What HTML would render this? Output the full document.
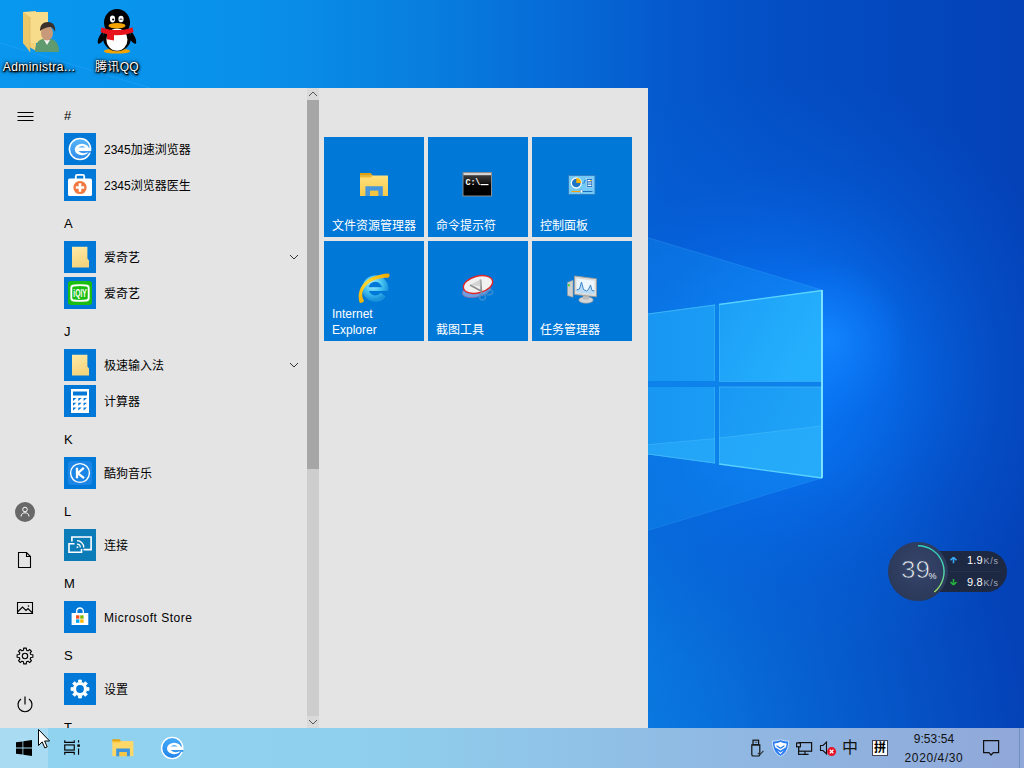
<!DOCTYPE html>
<html><head><meta charset="utf-8"><title>Desktop</title>
<style>
html,body{margin:0;padding:0}
body{width:1024px;height:768px;overflow:hidden;position:relative;background:#0560d0;font-family:"Liberation Sans","Noto Sans CJK SC",sans-serif;font-size:12px;color:#000}
.abs{position:absolute}
#wall{position:absolute;left:0;top:0}
/* desktop icons */
.dlabel{position:absolute;color:#fff;font-size:12px;line-height:14px;text-align:center;white-space:nowrap;text-shadow:1px 1px 1px #000,1px 1px 2px #000,0 0 2px rgba(0,0,0,.9),0 1px 3px rgba(0,0,0,.95),0 0 5px rgba(0,0,0,.6)}
/* start menu */
#start{position:absolute;left:0;top:88px;width:648px;height:640px;background:#e4e4e4;overflow:hidden}
.hdr{position:absolute;left:64px;height:36px;line-height:42px;font-size:13px;color:#000}
.item{position:absolute;left:64px;height:36px;width:240px}
.item .ic{position:absolute;left:0;top:2px;width:32px;height:32px;background:#0078d7}
.item .tx{position:absolute;left:40px;top:1px;line-height:36px;font-size:12px;white-space:nowrap}
.item .ch{position:absolute;left:225px;top:14px}
.tile{position:absolute;width:100px;height:100px;background:#0078d7;color:#fff}
.tile .lb{position:absolute;left:8px;bottom:3px;font-size:12px;line-height:16px}
.tile svg{position:absolute}
/* taskbar */
#task{position:absolute;left:0;top:728px;width:1024px;height:40px;background:linear-gradient(90deg,#90d3ef 0%,#8fd0ee 35%,#90bce4 65%,#90a8d9 100%)}
#sb{position:absolute;left:0;top:0;width:48px;height:40px;background:#a9dcf3}
.clock{position:absolute;font-size:12px;line-height:14px;color:#111;text-align:center;width:80px}
</style></head><body>
<svg id="wall" width="1024" height="768" viewBox="0 0 1024 768">
<defs>
<linearGradient id="bg" x1="0" y1="0" x2="1" y2="0">
<stop offset="0" stop-color="#0998ef"/><stop offset=".25" stop-color="#0990ea"/><stop offset=".42" stop-color="#087edf"/><stop offset=".55" stop-color="#066ad6"/><stop offset=".66" stop-color="#0558cc"/><stop offset=".76" stop-color="#044ec4"/><stop offset="1" stop-color="#0441b7"/>
</linearGradient>
<radialGradient id="low" cx="420" cy="820" r="620" gradientUnits="userSpaceOnUse">
<stop offset="0" stop-color="#0e90ee" stop-opacity=".9"/><stop offset=".5" stop-color="#0c86e8" stop-opacity=".55"/><stop offset="1" stop-color="#0a78e0" stop-opacity="0"/>
</radialGradient>
<radialGradient id="glow" cx="785" cy="375" r="300" gradientUnits="userSpaceOnUse">
<stop offset="0" stop-color="#0a80ff" stop-opacity=".95"/><stop offset=".35" stop-color="#0874f4" stop-opacity=".7"/><stop offset=".7" stop-color="#0664e0" stop-opacity=".3"/><stop offset="1" stop-color="#0560d8" stop-opacity="0"/>
</radialGradient>
<radialGradient id="glow2" cx="828" cy="340" r="80" gradientUnits="userSpaceOnUse">
<stop offset="0" stop-color="#1486ff" stop-opacity=".9"/><stop offset="1" stop-color="#0c78f8" stop-opacity="0"/>
</radialGradient>
<linearGradient id="beam" x1="822" y1="0" x2="300" y2="0" gradientUnits="userSpaceOnUse">
<stop offset="0" stop-color="#1898f8" stop-opacity=".85"/><stop offset=".35" stop-color="#108eee" stop-opacity=".65"/><stop offset="1" stop-color="#0d8ce8" stop-opacity=".3"/>
</linearGradient>
<linearGradient id="p1" x1="0" y1="0" x2="1" y2=".5"><stop offset="0" stop-color="#1b9ef6"/><stop offset="1" stop-color="#25b0fd"/></linearGradient>
<linearGradient id="p2" x1="0" y1="0" x2="1" y2=".4"><stop offset="0" stop-color="#1998f3"/><stop offset="1" stop-color="#1fa4f8"/></linearGradient>
<linearGradient id="p3" x1="0" y1="0" x2="1" y2="0"><stop offset="0" stop-color="#1592f0"/><stop offset="1" stop-color="#1b9cf5"/></linearGradient>
</defs>
<rect width="1024" height="768" fill="url(#bg)"/>
<rect width="1024" height="768" fill="url(#low)"/>
<rect width="1024" height="768" fill="url(#glow)"/>
<rect width="1024" height="768" fill="url(#glow2)"/>
<!-- beams -->
<polygon points="822,290 0,43 0,384 822,384" fill="url(#beam)" opacity=".5"/>
<polygon points="822,478 0,725 0,384 822,384" fill="url(#beam)" opacity=".5"/>
<line x1="822" y1="290" x2="0" y2="43" stroke="#49b4ff" stroke-width="1" opacity=".25"/>
<line x1="822" y1="478" x2="0" y2="725" stroke="#49b4ff" stroke-width="1" opacity=".2"/>
<!-- window frame tint -->
<polygon points="600,320 822,290 822,478 600,448" fill="#0c82ea"/>
<!-- panes -->
<polygon points="719,304 822,290 822,381 719,381" fill="url(#p1)"/>
<polygon points="719,387 822,387 822,478 719,464" fill="url(#p2)"/>
<polygon points="600,320 715,304.500 715,381 600,381" fill="url(#p3)"/>
<polygon points="600,387 715,387 715,463.500 600,448" fill="url(#p3)"/>
<polygon points="719,438 822,426 822,478 719,464" fill="#2cb0fc" opacity=".55"/>
<polygon points="600,449 715,438.500 715,463.500 600,448" fill="#2cb0fc" opacity=".5"/>
<path d="M719,438 L822,426" stroke="#58c8ff" stroke-width="1" opacity=".4"/>
<path d="M600,449 L715,438.500" stroke="#58c8ff" stroke-width="1" opacity=".35"/>
<path d="M719,304.500 L822,290.500 M719,464 L822,478" fill="none" stroke="#62d8ff" stroke-width="1.300" opacity=".9"/><path d="M719.500,381 V304.500 M719.500,387 V464" fill="none" stroke="#4cc0fc" stroke-width="1" opacity=".45"/>
<path d="M719,381.500 H822 M719,387 H822" fill="none" stroke="#4cc0fc" stroke-width="1" opacity=".6"/>
<path d="M600,320.500 L715,305 M600,447.500 L715,463" fill="none" stroke="#48bcfb" stroke-width="1" opacity=".75"/><path d="M714.500,305 V381 M714.500,387 V463" fill="none" stroke="#48bcfb" stroke-width="1" opacity=".4"/>
<line x1="822" y1="290" x2="822" y2="478" stroke="#86ecff" stroke-width="1.800"/>
</svg>

<!-- desktop icons -->
<svg class="abs" style="left:20px;top:8px" width="40" height="46" viewBox="0 0 40 46">
<path d="M3 4l13-1v40l-13-8z" fill="#f3d27a"/><path d="M3 4h25v31H10z" fill="#f7dc8c"/><path d="M3 4l7 5v35l-7-9z" fill="#eac769"/><path d="M10 9h0v35" stroke="#d9b455" stroke-width=".6"/>
<path d="M15 44c0-8 3-12 8-13l4 2 4-2c5 1 8 5 8 13z" fill="#5f9b6e"/><path d="M24 32l3 5 3-5z" fill="#f4f4f4"/>
<ellipse cx="27" cy="25" rx="6" ry="7.500" fill="#c99a7a"/><path d="M20 23c0-6 3-9 8-9s8 4 7 10c-1-3-3-5-5-5-3 0-6 1-10 4z" fill="#3a2f2a"/>
</svg>
<div class="dlabel" style="left:0;top:60px;width:78px;letter-spacing:.45px">Administra...</div>
<svg class="abs" style="left:96px;top:8px" width="42" height="46" viewBox="0 0 42 48" preserveAspectRatio="none">
<ellipse cx="21" cy="45" rx="13" ry="2.600" fill="#f5a300"/>
<path d="M7 24c-4 5-6 10-5 13 1 1 3-1 6-4zM35 24c4 5 6 10 5 13-1 1-3-1-6-4z" fill="#000"/>
<ellipse cx="21" cy="31" rx="14" ry="14" fill="#000"/>
<ellipse cx="21" cy="15" rx="13" ry="14" fill="#000"/>
<ellipse cx="21" cy="33" rx="10.500" ry="11.500" fill="#fff"/>
<path d="M5.500 20c9 4 22 4 31 0l1 5c-10 4.500-23 4.500-33 0z" fill="#e8121d"/>
<path d="M11 24l7 1.500v8.500l-7-1.500z" fill="#e8121d"/>
<ellipse cx="16.500" cy="11.500" rx="2.600" ry="3.600" fill="#fff"/><ellipse cx="25" cy="11.500" rx="2.600" ry="3.400" fill="#fff"/>
<circle cx="17.200" cy="12" r="1.100" fill="#000"/><path d="M23.600 12.200q1.400-1.800 2.800 0" stroke="#000" stroke-width=".9" fill="none"/>
<ellipse cx="21" cy="18.500" rx="8.500" ry="2.800" fill="#f5a300"/>
</svg>
<div class="dlabel" style="left:78px;top:60px;width:78px;letter-spacing:.3px">腾讯QQ</div>
<div id="start">
<!-- left rail -->
<svg class="abs" style="left:0;top:0" width="48" height="640" viewBox="0 0 48 640" fill="none" stroke="#000" stroke-width="1.100">
<path d="M17.500 24.500h16M17.500 28.500h16M17.500 32.500h16" stroke-width="1"/>
<circle cx="25" cy="424" r="10" fill="#686868" stroke="none"/>
<circle cx="25" cy="421.500" r="2.300" stroke="#fff" stroke-width="1"/><path d="M21 428.500c0-5 8-5 8 0" stroke="#fff" stroke-width="1"/>
<path d="M18.500 464.500h8l4 4v11h-12z M26.500 464.500v4h4"/>
<path d="M17.500 514.500h15v11h-15z M17.500 524l5-5 3.500 3.500 2-2 4.500 4.500"/><circle cx="28.500" cy="518" r=".8" fill="#000" stroke="none"/>
<g transform="translate(25 568)" stroke-width="1.100" stroke-linejoin="round"><circle r="2.700"/><path d="M-1.50 -5.81L-1.32 -7.89L1.32 -7.89L1.50 -5.81L3.05 -5.17L4.65 -6.51L6.51 -4.65L5.17 -3.05L5.81 -1.50L7.89 -1.32L7.89 1.32L5.81 1.50L5.17 3.05L6.51 4.65L4.65 6.51L3.05 5.17L1.50 5.81L1.32 7.89L-1.32 7.89L-1.50 5.81L-3.05 5.17L-4.65 6.51L-6.51 4.65L-5.17 3.05L-5.81 1.50L-7.89 1.32L-7.89 -1.32L-5.81 -1.50L-5.17 -3.05L-6.51 -4.65L-4.65 -6.51L-3.05 -5.17z"/></g>
<path d="M25 608.500v8M21 611a7 7 0 1 0 8 0" stroke-width="1.200"/>
</svg>
<!-- headers -->
<div class="hdr" style="top:7px">#</div>
<div class="hdr" style="top:115px">A</div>
<div class="hdr" style="top:223px">J</div>
<div class="hdr" style="top:331px">K</div>
<div class="hdr" style="top:403px">L</div>
<div class="hdr" style="top:475px">M</div>
<div class="hdr" style="top:547px">S</div>
<div class="hdr" style="top:619px">T</div>
<!-- items -->
<div class="item" style="top:43px"><div class="ic"><svg width="32" height="32" viewBox="0 0 32 32"><defs><linearGradient id="e23" x1="0" y1="0" x2="0" y2="1"><stop offset="0" stop-color="#5ab6f8"/><stop offset="1" stop-color="#2c8cec"/></linearGradient></defs><circle cx="16" cy="16" r="10.600" fill="url(#e23)" stroke="#fff" stroke-width="1.500"/><ellipse cx="18" cy="16.500" rx="7.200" ry="5.700" fill="#fff"/><path d="M14.300 14.600Q18 11.300 21.700 14.600z" fill="#4dabf5"/><path d="M14.400 17.900H27v2.100l-4.200-.5Q18.200 21.700 14.400 17.900z" fill="#3797ee"/><rect x="18" y="14.900" width="8.800" height="3" fill="#fff"/></svg></div><div class="tx">2345加速浏览器</div></div>
<div class="item" style="top:79px"><div class="ic"><svg width="32" height="32" viewBox="0 0 32 32"><path d="M11.800 10V7.200a1.400 1.400 0 0 1 1.400-1.400h5.600a1.400 1.400 0 0 1 1.400 1.400V10" fill="none" stroke="#fff" stroke-width="1.800"/><rect x="4" y="9.600" width="24" height="17.400" rx="1.600" fill="#fff"/><circle cx="16" cy="18.500" r="6.600" fill="#f0783e"/><path d="M16 14.300v8.400M11.800 18.500h8.400" stroke="#fff" stroke-width="2.600"/></svg></div><div class="tx">2345浏览器医生</div></div>
<div class="item" style="top:151px"><div class="ic"><svg width="32" height="32" viewBox="0 0 32 32"><defs><linearGradient id="fo" x1="0" y1="0" x2=".3" y2="1"><stop offset="0" stop-color="#ffeaa6"/><stop offset="1" stop-color="#f4d47e"/></linearGradient></defs><path d="M8 5.700h15.400v11.900l1.600 1.800v7.100H8z" fill="url(#fo)"/></svg></div><div class="tx">爱奇艺</div><svg class="ch" width="10" height="8" viewBox="0 0 10 8"><path d="M1 2l4 4 4-4" fill="none" stroke="#333" stroke-width="1"/></svg></div>
<div class="item" style="top:187px"><div class="ic"><svg width="32" height="32" viewBox="0 0 32 32"><rect x="4" y="4" width="24" height="24" rx="3" fill="#1bbd10"/><path d="M7.300 11c0-1.700 1-2.400 2.400-2.500 4.200-.5 8.400-.5 12.600 0 1.400.1 2.400.8 2.400 2.500v10c0 1.700-1 2.400-2.400 2.500-4.200.5-8.400.5-12.600 0-1.400-.1-2.400-.8-2.400-2.500z" fill="none" stroke="#fff" stroke-width="1.900"/><text x="16.100" y="20" font-family="Liberation Sans,sans-serif" font-weight="bold" font-size="10" text-anchor="middle" fill="#fff" textLength="13.500" lengthAdjust="spacingAndGlyphs">iQIY</text></svg></div><div class="tx">爱奇艺</div></div>
<div class="item" style="top:259px"><div class="ic"><svg width="32" height="32" viewBox="0 0 32 32"><path d="M8 5.700h15.400v11.900l1.600 1.800v7.100H8z" fill="url(#fo)"/></svg></div><div class="tx">极速输入法</div><svg class="ch" width="10" height="8" viewBox="0 0 10 8"><path d="M1 2l4 4 4-4" fill="none" stroke="#333" stroke-width="1"/></svg></div>
<div class="item" style="top:295px"><div class="ic"><svg width="32" height="32" viewBox="0 0 32 32"><rect x="7" y="4" width="18" height="24" fill="#fff"/><rect x="9" y="6.500" width="14" height="4" fill="#0078d7"/><g fill="#0078d7"><path d="M9 13h3.400L9 16zM14.300 13h3.400l-3.400 3zM19.600 13H23l-3.400 3zM9 17.700h3.400L9 20.700zM14.300 17.700h3.400l-3.400 3zM19.600 17.700H23l-3.400 3zM9 22.400h3.400L9 25.400zM14.300 22.400h3.400l-3.400 3zM19.600 22.400H23l-3.400 3z"/></g></svg></div><div class="tx">计算器</div></div>
<div class="item" style="top:367px"><div class="ic"><svg width="32" height="32" viewBox="0 0 32 32"><rect x="4" y="4" width="24" height="24" rx="4" fill="#1c86e6"/><circle cx="16" cy="16" r="9.400" fill="none" stroke="#fff" stroke-width="1.400"/><path d="M13 10.800v10.400M19.800 10.800l-6 5.400 6.200 5" fill="none" stroke="#fff" stroke-width="2.300"/></svg></div><div class="tx">酷狗音乐</div></div>
<div class="item" style="top:439px"><div class="ic" style="background:#0c7cb8"><svg width="32" height="32" viewBox="0 0 32 32" fill="none" stroke="#fff" stroke-width="1.600"><path d="M7.900 12.500V8h19.200v12.600H19.500"/><path d="M10.500 14.700H5v8.500h12.500V20"/><path d="M13 15.200a3.300 3.300 0 0 1 3.300 3.300M13 11.700a6.800 6.800 0 0 1 6.800 6.800" stroke-width="1.300"/><circle cx="13.400" cy="18.200" r=".9" fill="#fff" stroke="none"/></svg></div><div class="tx">连接</div></div>
<div class="item" style="top:511px"><div class="ic"><svg width="32" height="32" viewBox="0 0 32 32"><path d="M12.700 12V10.300a3.300 3.300 0 0 1 6.600 0V12" fill="none" stroke="#fff" stroke-width="1.300"/><path d="M7.600 12h16.700v12H7.600z" fill="#fff"/><rect x="12" y="14.300" width="3.400" height="3.400" fill="#f25022"/><rect x="16.200" y="14.300" width="3.400" height="3.400" fill="#7fba00"/><rect x="12" y="18.400" width="3.400" height="3.400" fill="#00a4ef"/><rect x="16.200" y="18.400" width="3.400" height="3.400" fill="#ffb900"/></svg></div><div class="tx" style="letter-spacing:.52px">Microsoft Store</div></div>
<div class="item" style="top:583px"><div class="ic"><svg width="32" height="32" viewBox="0 0 32 32"><g transform="translate(16 16)"><path d="M-1.62 -6.50L-1.42 -8.99L1.42 -8.99L1.62 -6.50L3.45 -5.74L5.35 -7.36L7.36 -5.35L5.74 -3.45L6.50 -1.62L8.99 -1.42L8.99 1.42L6.50 1.62L5.74 3.45L7.36 5.35L5.35 7.36L3.45 5.74L1.62 6.50L1.42 8.99L-1.42 8.99L-1.62 6.50L-3.45 5.74L-5.35 7.36L-7.36 5.35L-5.74 3.45L-6.50 1.62L-8.99 1.42L-8.99 -1.42L-6.50 -1.62L-5.74 -3.45L-7.36 -5.35L-5.35 -7.36L-3.45 -5.74z" fill="#fff" stroke="#fff" stroke-width=".8" stroke-linejoin="round"/><circle r="3.900" fill="#0078d7"/></g></svg></div><div class="tx">设置</div></div>
<!-- scrollbar -->
<div class="abs" style="left:307px;top:0;width:12px;height:640px;background:#cdcdcd"></div>
<div class="abs" style="left:307px;top:0;width:12px;height:12px;background:#dadada"></div>
<div class="abs" style="left:307px;top:628px;width:12px;height:12px;background:#dadada"></div>
<div class="abs" style="left:307px;top:12px;width:12px;height:369px;background:#a6a6a6"></div>
<svg class="abs" style="left:307px;top:0" width="12" height="12" viewBox="0 0 12 12"><path d="M2 8l4-4 4 4" fill="none" stroke="#555" stroke-width="1"/></svg>
<svg class="abs" style="left:307px;top:628px" width="12" height="12" viewBox="0 0 12 12"><path d="M2 4l4 4 4-4" fill="none" stroke="#555" stroke-width="1"/></svg>
<!-- tiles -->
<div class="tile" style="left:324px;top:49px"><svg style="left:34px;top:33px" width="32" height="32" viewBox="0 0 32 32"><defs><linearGradient id="fg" x1="0" y1="0" x2="0" y2="1"><stop offset="0" stop-color="#ffe07c"/><stop offset="1" stop-color="#f7c94a"/></linearGradient></defs><path d="M2 3h10.500l2.500 2.600H2z" fill="#e3a008"/><path d="M2 5.500h28V26H2z" fill="url(#fg)"/><path d="M2 5.500h13l-2.200 2H2z" fill="#f2b730"/><path d="M7.400 16.300h17.400V26h-4.600v-5.200h-8.200V26H7.400z" fill="#4795dd"/><rect x="12" y="20.800" width="8.200" height="5.200" fill="#f5c443"/></svg><div class="lb">文件资源管理器</div></div>
<div class="tile" style="left:428px;top:49px"><svg style="left:34px;top:34px" width="32" height="28" viewBox="0 0 32 28"><defs><linearGradient id="cg" x1="0" y1="0" x2="0" y2="1"><stop offset="0" stop-color="#4a4a4a"/><stop offset=".45" stop-color="#151515"/><stop offset=".5" stop-color="#000"/></linearGradient></defs><rect x="1" y="1.500" width="28.500" height="23.500" fill="url(#cg)" stroke="#8c8c8c" stroke-width="1"/><rect x="1.500" y="2" width="27.500" height="2.200" fill="#d4d4d4"/><text x="3.600" y="14.200" font-family="Liberation Mono,monospace" font-weight="bold" font-size="8.500" fill="#fff" letter-spacing="-.3">C:\</text><rect x="18.500" y="13" width="8" height="1.200" fill="#fff"/></svg><div class="lb">命令提示符</div></div>
<div class="tile" style="left:532px;top:49px"><svg style="left:36px;top:38px" width="28" height="20" viewBox="0 0 28 20"><rect x=".5" y=".5" width="26.500" height="19" fill="#74caf7" stroke="#2f7fc4" stroke-width="1"/><circle cx="8.300" cy="8" r="5" fill="#1f74c6" stroke="#f4fbff" stroke-width="1.300"/><path d="M8.300 8V3a5 5 0 0 1 5 5z" fill="#f8b400"/><path d="M14 8h2.500V5.500H18" fill="none" stroke="#2f86d4" stroke-width=".9"/><rect x="18.500" y="3.500" width="6" height="9" fill="#2478ca" stroke="#bfe4ff" stroke-width=".6"/><path d="M19.600 5.600h3.800M19.600 8h3.800M19.600 10.400h3.800" stroke="#fff" stroke-width="1.100"/><rect x="22" y="5" width="1.400" height="1.200" fill="#f8b400"/><path d="M3.500 16.500h9" stroke="#f7a000" stroke-width="1.200"/><path d="M14 16.500h10.500" stroke="#1f6fc0" stroke-width="1"/><rect x="12.200" y="15" width="2.400" height="3" fill="#fff" stroke="#2f7fc4" stroke-width=".4"/></svg><div class="lb">控制面板</div></div>
<div class="tile" style="left:324px;top:153px"><svg style="left:33px;top:30px" width="36" height="36" viewBox="0 0 36 36"><defs><radialGradient id="ieg" cx="16" cy="13" r="16" gradientUnits="userSpaceOnUse"><stop offset="0" stop-color="#b4f0ff"/><stop offset=".55" stop-color="#46c4f2"/><stop offset="1" stop-color="#1b92dc"/></radialGradient><linearGradient id="gold" x1="0" y1="1" x2="1" y2="0"><stop offset="0" stop-color="#f3b000"/><stop offset=".5" stop-color="#ffd92e"/><stop offset="1" stop-color="#f0a600"/></linearGradient></defs><path d="M26.200 23.600A10 10 0 1 1 28.200 18" fill="none" stroke="url(#ieg)" stroke-width="6.400"/><path d="M10 18.100h21.300" stroke="url(#ieg)" stroke-width="3.800"/><path d="M2.500 31.600C-1 19 7 4 31.500 2.500c1.800 1 1.200 3.400-.5 4.200C9 6.500 1.500 21.500 7 29.600c-.3 1.900-3.200 2.900-4.500 2z" fill="url(#gold)"/></svg><div class="lb">Internet<br>Explorer</div></div>
<div class="tile" style="left:428px;top:153px"><svg style="left:32px;top:30px" width="36" height="34" viewBox="0 0 36 34"><ellipse cx="16.500" cy="19.500" rx="14.500" ry="6.500" transform="rotate(-13 16.500 19.500)" fill="#6f9fe0" stroke="#8a6fa8" stroke-width=".8"/><ellipse cx="18" cy="13.500" rx="15" ry="8.300" transform="rotate(-15 18 13.500)" fill="#f1f1f1" stroke="#e0262a" stroke-width="1.400"/><path d="M10 14l12 6.500M20.500 8.500L21.500 22" stroke="#8e8e8e" stroke-width="1.700" fill="none"/><path d="M10 14l10.700 1.500-.2-7z" fill="#c9c9c9" opacity=".75"/><circle cx="22.500" cy="26" r="3" fill="none" stroke="#3f92d4" stroke-width="1.400" opacity=".85"/><ellipse cx="29.500" cy="21.500" rx="3.300" ry="2.300" fill="none" stroke="#3f92d4" stroke-width="1.400" transform="rotate(-20 29.500 21.500)" opacity=".85"/></svg><div class="lb">截图工具</div></div>
<div class="tile" style="left:532px;top:153px"><svg style="left:34px;top:32px" width="32" height="31" viewBox="0 0 32 31"><path d="M1.500 9.500l5.500-2.200v17l-5.500-1.700z" fill="#cfcfcf" stroke="#9a9a9a" stroke-width=".6"/><rect x="2.200" y="11" width="1.600" height="2.400" fill="#35d435"/><ellipse cx="20" cy="27" rx="7.200" ry="3.200" fill="#d6d6d6" stroke="#a0a0a0" stroke-width=".6"/><path d="M17 20.500h6v6h-6z" fill="#bcbcbc"/><path d="M8.500 3L30.500 5.800v18L8.500 21.500z" fill="#dcdad6" stroke="#a09890" stroke-width=".8"/><path d="M10.500 5.600l18 2.200v13.700l-18-2z" fill="#edf7ff"/><path d="M10.500 17l3-1 2-7 2 7.500 3 1.500 2-1.500 2-4.500 1.500 5.500 2.500.5v3.500l-18-2z" fill="#bcdcf6"/><path d="M10.500 17l3-1 2-7 2 7.500 3 1.500 2-1.500 2-4.500 1.500 5.500 2.500.5" fill="none" stroke="#3a86c8" stroke-width="1"/></svg><div class="lb">任务管理器</div></div>

</div>
<!-- widget -->
<div class="abs" style="left:936px;top:550.500px;width:71px;height:41px;border-radius:0 20.500px 20.500px 0;background:#1d2843"></div>
<div class="abs" style="left:950px;top:570.500px;width:50px;height:1px;background:#26314f"></div>
<div class="abs" style="left:888px;top:541.500px;width:59.500px;height:59.500px;border-radius:50%;background:radial-gradient(circle at 50% 42%,#35456a 0,#2d3b5d 60%,#293656 88%,#34446a 100%)"></div>
<svg class="abs" style="left:888px;top:541.500px" width="60" height="60" viewBox="0 0 60 60"><defs><linearGradient id="arc" x1="0" y1="0" x2="0" y2="1"><stop offset="0" stop-color="#2fd0c4"/><stop offset=".6" stop-color="#4fd8a8"/><stop offset="1" stop-color="#a8e25e"/></linearGradient></defs><path d="M30 3.700A26 26 0 0 1 46.300 50" fill="none" stroke="url(#arc)" stroke-width="1.400"/></svg>
<div class="abs" style="left:901px;top:555.500px;font-size:24.500px;line-height:28px;color:#e9ecf2;-webkit-text-stroke:.7px #303f62;transform:scaleX(1.060);transform-origin:left">39</div>
<div class="abs" style="left:928.500px;top:571px;font-size:9px;line-height:10px;color:#e9ecf2">%</div>
<svg class="abs" style="left:948px;top:555px" width="12" height="32" viewBox="0 0 12 32"><path d="M5.500 2.300L2.500 5.300M5.500 2.300l3 3M5.500 2.800V8.300" stroke="#3aa8f6" stroke-width="1.600" fill="none"/><path d="M5.500 30l-3-3M5.500 30l3-3M5.500 29.500V24" stroke="#22b43a" stroke-width="1.600" fill="none"/></svg>
<div class="abs" style="left:967px;top:554px;font-size:11px;line-height:13px;color:#fff;white-space:nowrap;letter-spacing:.2px">1.9<span style="font-size:9px;color:#a0a8bc;letter-spacing:.75px;margin-left:.5px">K/s</span></div>
<div class="abs" style="left:967px;top:576px;font-size:11px;line-height:13px;color:#fff;white-space:nowrap;letter-spacing:.2px">9.8<span style="font-size:9px;color:#a0a8bc;letter-spacing:.75px;margin-left:.5px">K/s</span></div>
<!-- taskbar -->
<div id="task"><div id="sb"></div>
<svg class="abs" style="left:16px;top:12px" width="16" height="16" viewBox="0 0 16 16"><path d="M0 2.300l6.500-.9v6.200H0zM7.300 1.300L16 0v7.600H7.300zM0 8.400h6.500v6.200L0 13.700zM7.300 8.400H16V16l-8.700-1.300z" fill="#000"/></svg>
<svg class="abs" style="left:63px;top:12px" width="18" height="16" viewBox="0 0 18 16" fill="none" stroke="#000" stroke-width="1.150"><rect x="1.750" y="4.950" width="9.500" height="5.100"/><path d="M1.750 .2V2.400h9.500V.2M1.750 14.800V12.400h9.500V14.800"/><path d="M15.550 .2V2.600M15.550 8.400V14.800"/><rect x="14.350" y="4.400" width="2.500" height="2.400" fill="#000" stroke="none"/></svg>
<svg class="abs" style="left:112px;top:11px" width="22" height="18" viewBox="0 0 22 18"><path d="M.3.200h7l1.800 1.900H.3z" fill="#e5a50a"/><path d="M.3 2.100h21.100v15.100H.3z" fill="#ffd86a"/><path d="M.3 2.100h8.800L7.600 3.600H.3z" fill="#f5bf3a"/><path d="M4.200 9.400h13.700v7.800h-3.300v-4.200H7.500v4.200H4.200z" fill="#3f94de"/><rect x="7.500" y="13" width="7.100" height="4.200" fill="#f5c544"/></svg>
<svg class="abs" style="left:160px;top:8px" width="24" height="24" viewBox="0 0 24 24"><defs><linearGradient id="e24" x1="0" y1="0" x2="0" y2="1"><stop offset="0" stop-color="#46aaf8"/><stop offset="1" stop-color="#1f84ea"/></linearGradient></defs><circle cx="12.200" cy="12" r="10.600" fill="url(#e24)" stroke="#fff" stroke-width="1.400"/><g transform="translate(-3.800 -4)"><ellipse cx="18" cy="16.500" rx="7.200" ry="5.700" fill="#fff"/><path d="M14.300 14.600Q18 11.300 21.700 14.600z" fill="#4dabf5"/><path d="M14.400 17.900H27v2.100l-4.200-.5Q18.200 21.700 14.400 17.900z" fill="#3797ee"/><rect x="18" y="14.900" width="8.800" height="3" fill="#fff"/></g></svg>
<!-- tray -->
<svg class="abs" style="left:750px;top:11px" width="15" height="19" viewBox="0 0 15 19" fill="none" stroke="#111" stroke-width="1.200"><rect x="3" y="1.200" width="5.600" height="4.600"/><path d="M4.800 3.300h.8M6.400 3.300h.8" stroke-width="1"/><path d="M1.800 5.800h8v9.600a1.600 1.600 0 0 1-1.600 1.600H3.400a1.600 1.600 0 0 1-1.600-1.600z"/><path d="M7.800 13.800l1.900 2 3.800-4" stroke="#333" stroke-width="1.100"/></svg>
<svg class="abs" style="left:771px;top:10px" width="19" height="20" viewBox="0 0 19 20"><path d="M9.500 1.600C7 2.700 4.200 3.100 1.400 3.100c0 6.600 1.800 11.900 8.100 15.300C15.800 15 17.600 9.700 17.600 3.100c-2.800 0-5.600-.4-8.100-1.500z" fill="#2a7df0" stroke="#cfe6ff" stroke-width="1"/><path d="M3.400 5.400c2.200 0 4.200-.5 6.100-1.700 1.900 1.200 3.900 1.700 6.100 1.700-.1 1.400-.3 2.600-.7 3.800L9.500 12.600 4.100 9.200c-.4-1.200-.6-2.400-.7-3.800z" fill="#fff"/><path d="M5.600 6.900l3.900 2.500 3.900-2.500v1.700L9.500 11.100 5.600 8.600z" fill="#2a7df0"/><path d="M6.300 12.600l3.200 2 3.200-2-3.200 3.600z" fill="#fff"/></svg>
<svg class="abs" style="left:795px;top:11px" width="18" height="18" viewBox="0 0 18 18" fill="none" stroke="#111" stroke-width="1.200"><rect x="3.600" y="3.600" width="13" height="8.600"/><path d="M10 12.200v3.200M6.600 15.400h7"/><rect x="1.600" y="4" width="3.800" height="3.800" fill="#a5bfe4"/><path d="M3.600 7.800v7.600h3"/></svg>
<svg class="abs" style="left:818px;top:11px" width="20" height="18" viewBox="0 0 20 18"><path d="M2.500 6.500h2.500l3.500-3.500v12L5 11.500H2.500z" fill="none" stroke="#111" stroke-width="1.100"/><circle cx="13.600" cy="12.600" r="4.500" fill="#e81123"/><path d="M11.800 10.800l3.600 3.600M15.400 10.800l-3.600 3.600" stroke="#fff" stroke-width="1.300"/></svg>
<div class="abs" style="left:841px;top:10px;width:18px;font-size:16px;line-height:20px;color:#111;text-align:center">中</div>
<div class="abs" style="left:872px;top:12px;width:16px;height:16px;background:#fff;border:1px solid #445;box-sizing:border-box"></div>
<div class="abs" style="left:872px;top:12px;width:16px;font-size:12px;line-height:16px;color:#000;text-align:center;font-weight:bold">拼</div>
<div class="clock" style="left:894px;top:4px;letter-spacing:.1px">9:53:54</div>
<div class="clock" style="left:894px;top:23px;letter-spacing:.6px">2020/4/30</div>
<svg class="abs" style="left:982px;top:11px" width="18" height="18" viewBox="0 0 18 18" fill="none" stroke="#111" stroke-width="1.200"><path d="M1.600 1.600h15v12h-5.300l-2.200 2.400-2.200-2.400H1.600z"/></svg>
<div class="abs" style="left:1019px;top:0;width:1px;height:40px;background:#6f8fc0"></div>
</div>
<svg class="abs" style="left:37px;top:728px" width="14" height="22" viewBox="0 0 14 22"><path d="M1.500 1.500v16l3.700-3.600 2.600 6 2.400-1-2.600-5.900h5z" fill="#fff" stroke="#000" stroke-width="1"/></svg>
</body></html>
